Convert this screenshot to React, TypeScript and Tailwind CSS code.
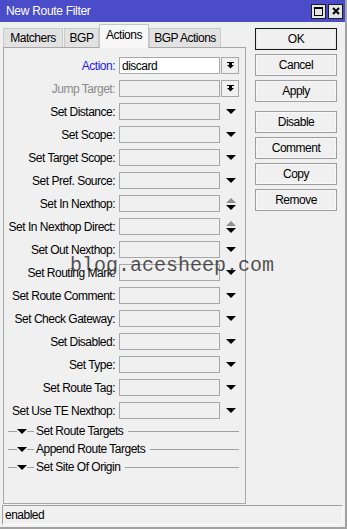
import React from "react";

type Kind = "action" | "jump" | "tri" | "updown";
interface Row {
  label: string;
  kind: Kind;
  value?: string;
  labelClass?: string;
}

const rows: Row[] = [
  { label: "Action:", kind: "action", value: "discard", labelClass: "text-[#1c1cf5]" },
  { label: "Jump Target:", kind: "jump", labelClass: "text-[#8a8a8a]" },
  { label: "Set Distance:", kind: "tri" },
  { label: "Set Scope:", kind: "tri" },
  { label: "Set Target Scope:", kind: "tri" },
  { label: "Set Pref. Source:", kind: "tri" },
  { label: "Set In Nexthop:", kind: "updown" },
  { label: "Set In Nexthop Direct:", kind: "updown" },
  { label: "Set Out Nexthop:", kind: "tri" },
  { label: "Set Routing Mark:", kind: "tri" },
  { label: "Set Route Comment:", kind: "tri" },
  { label: "Set Check Gateway:", kind: "tri" },
  { label: "Set Disabled:", kind: "tri" },
  { label: "Set Type:", kind: "tri" },
  { label: "Set Route Tag:", kind: "tri" },
  { label: "Set Use TE Nexthop:", kind: "tri" },
];

const sections = ["Set Route Targets", "Append Route Targets", "Set Site Of Origin"];

function DownTri({ color = "#000" }: { color?: string }) {
  return (
    <svg width="10" height="5" viewBox="0 0 10 5" className="block shrink-0">
      <polygon points="0,0 10,0 5,5" fill={color} />
    </svg>
  );
}

function UpTri({ color = "#909090" }: { color?: string }) {
  return (
    <svg width="10" height="5" viewBox="0 0 10 5" className="block shrink-0">
      <polygon points="0,5 10,5 5,0" fill={color} />
    </svg>
  );
}

function DropBtn() {
  return (
    <div className="ml-[1px] w-[18px] h-[17px] border border-[#a8a8a8] bg-[#f0f0f0] flex items-center justify-center">
      <svg width="7" height="7" viewBox="0 0 7 7" className="block">
        <rect x="0" y="0" width="7" height="1" fill="#000" />
        <rect x="2" y="1" width="3" height="2" fill="#000" />
        <polygon points="0,3 7,3 3.5,6.5" fill="#000" />
      </svg>
    </div>
  );
}

function FieldRow({ row }: { row: Row }) {
  return (
    <div className="h-[23px] flex items-center">
      <div className={`w-[111px] text-right whitespace-nowrap ${row.labelClass ?? "text-black"}`}>{row.label}</div>
      <div
        className={`ml-[4px] w-[101px] h-[17px] border border-[#a8a8a8] flex items-center pl-[2px] ${
          row.kind === "action" ? "bg-white" : "bg-[#f0f0f0]"
        }`}
      >
        {row.value}
      </div>
      {row.kind === "action" || row.kind === "jump" ? (
        <DropBtn />
      ) : row.kind === "tri" ? (
        <div className="w-[19px] flex justify-center pl-[2px]">
          <DownTri />
        </div>
      ) : (
        <div className="w-[19px] flex flex-col items-center pl-[2px] gap-[2px]">
          <UpTri />
          <DownTri />
        </div>
      )}
    </div>
  );
}

function SectionRow({ label }: { label: string }) {
  return (
    <div className="h-[18px] flex items-center">
      <div className="ml-[4px] w-[9px] h-px bg-[#a0a0a0]" />
      <DownTri />
      <div className="w-[7px] h-px bg-[#a0a0a0]" />
      <div className="ml-[2px] whitespace-nowrap">{label}</div>
      <div className="ml-[5px] mr-[6px] flex-1 h-px bg-[#a0a0a0]" />
    </div>
  );
}

function Tab({ label, w, selected }: { label: string; w: string; selected?: boolean }) {
  return selected ? (
    <div
      className={`${w} h-[24px] -mb-px relative z-10 bg-[#f7f7f7] border border-b-0 border-[#c6c6c6] flex items-center justify-center pb-[3px]`}
    >
      {label}
    </div>
  ) : (
    <div className={`${w} h-[19px] bg-[#e2e2e2] border border-b-0 border-[#cacaca] flex items-center justify-center`}>
      {label}
    </div>
  );
}

function Btn({ label, primary, extra = "" }: { label: string; primary?: boolean; extra?: string }) {
  return (
    <div
      className={`h-[22px] w-[82px] flex items-center justify-center bg-[#f0f0f0] border ${
        primary ? "border-[#1a1a1a]" : "border-[#9e9e9e]"
      } ${extra}`}
    >
      <div className={`w-full h-full flex items-center justify-center border ${primary ? "border-[#e8e8e8]" : "border-[#f8f8f8]"}`}>
        {label}
      </div>
    </div>
  );
}

export default function App() {
  return (
    <div className="w-[347px] h-[529px] bg-[#f0f0f0] relative overflow-hidden font-['Liberation_Sans',Arial,sans-serif] text-[12px] leading-[14px] tracking-[-0.5px] text-black border-r-2 border-b-2 border-[#a2a2a2] flex flex-col">
      {/* Title bar */}
      <div className="h-[22px] shrink-0 bg-[#4b4cc9] flex items-center pl-[6px] pr-[2px]">
        <div className="text-white flex-1 tracking-[-0.3px]">New Route Filter</div>
        <div className="flex gap-[2px] items-center">
          <div className="w-[15px] h-[15px] bg-[#e4e4e4] border border-[#1e1e1e] flex items-center justify-center">
            <div className="w-[9px] h-[9px] border border-black border-t-2" />
          </div>
          <div className="w-[15px] h-[15px] bg-[#e4e4e4] border border-[#1e1e1e] flex items-center justify-center">
            <svg width="8" height="8" viewBox="0 0 8 8" className="block">
              <path d="M1 1 L7 7 M7 1 L1 7" stroke="#000" strokeWidth="2" />
            </svg>
          </div>
        </div>
      </div>

      {/* Body */}
      <div className="flex h-[483px] shrink-0">
        <div className="w-[246px] pl-[3px] flex flex-col">
          <div className="h-[25px] flex items-end">
            <Tab label="Matchers" w="w-[60px]" />
            <div className="w-[1px]" />
            <Tab label="BGP" w="w-[35px]" />
            <Tab label="Actions" w="w-[50px]" selected />
            <Tab label="BGP Actions" w="w-[72px]" />
          </div>
          <div className="h-[457px] border border-[#a8a8a8] pt-[6px] flex flex-col">
            {rows.map((r) => (
              <FieldRow key={r.label} row={r} />
            ))}
            {sections.map((s) => (
              <SectionRow key={s} label={s} />
            ))}
          </div>
        </div>
        <div className="pl-[9px] pt-[6px] flex flex-col gap-[4px]">
          <Btn label="OK" primary />
          <Btn label="Cancel" />
          <Btn label="Apply" />
          <Btn label="Disable" extra="mt-[5px]" />
          <Btn label="Comment" />
          <Btn label="Copy" />
          <Btn label="Remove" />
        </div>
      </div>

      {/* Status bar */}
      <div className="mx-[2px] h-[20px] shrink-0 border border-[#a0a0a0] border-b-[#fcfcfc] border-r-[#fcfcfc] flex items-center pl-[2px]">
        enabled
      </div>

      {/* Watermark */}
      <div className="absolute left-[70px] top-[256px] text-[20px] leading-[20px] tracking-normal font-['Liberation_Mono',monospace] text-[rgba(50,50,50,0.85)] whitespace-nowrap pointer-events-none">
        blog.acesheep.com
      </div>
    </div>
  );
}
